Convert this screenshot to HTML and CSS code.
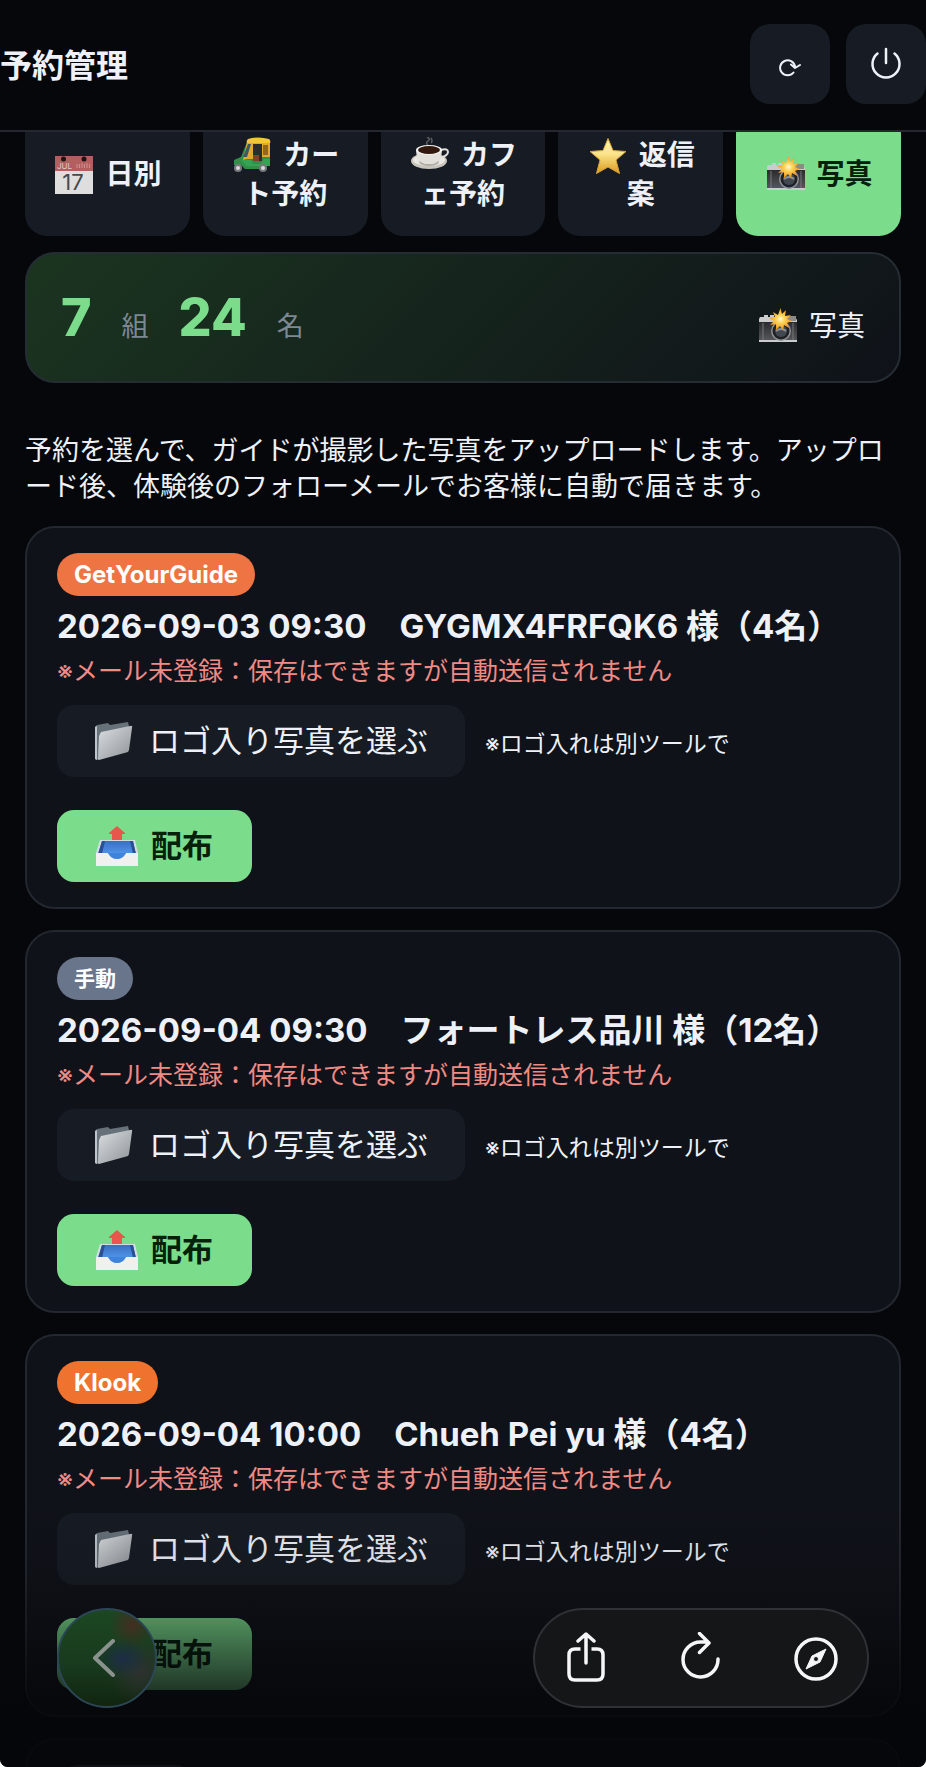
FILE: index.html
```html
<!DOCTYPE html>
<html lang="ja">
<head>
    <meta charset="UTF-8">
    <meta name="viewport" content="width=device-width, initial-scale=1.0">
    <title>予約管理</title>
    <link rel="stylesheet" href="styles.css">
</head>
<body>

    <!-- Shared icons -->
    <svg class="sprite" aria-hidden="true">
        <defs>
            <linearGradient id="gold" x1="0" y1="0" x2="0" y2="1">
                <stop offset="0" stop-color="#fff3b0"/>
                <stop offset="0.45" stop-color="#fbe38a"/>
                <stop offset="1" stop-color="#dc9a1c"/>
            </linearGradient>
            <linearGradient id="silver" x1="0" y1="0" x2="1" y2="1">
                <stop offset="0" stop-color="#dcdfe2"/>
                <stop offset="1" stop-color="#8d9297"/>
            </linearGradient>
            <linearGradient id="cameraBody" x1="0" y1="0" x2="0" y2="1">
                <stop offset="0" stop-color="#2b2b2c"/>
                <stop offset="1" stop-color="#55565a"/>
            </linearGradient>
            <radialGradient id="flash">
                <stop offset="0" stop-color="#fffbe0"/>
                <stop offset="0.35" stop-color="#ffd65a"/>
                <stop offset="1" stop-color="#f0901c"/>
            </radialGradient>
            <linearGradient id="trayBlue" x1="0" y1="0" x2="0" y2="1">
                <stop offset="0" stop-color="#3a6fc0"/>
                <stop offset="1" stop-color="#4f95ea"/>
            </linearGradient>
        </defs>

        <symbol id="icon-rickshaw" viewBox="0 0 38 38">
            <path d="M14 5 8 20l-7 3v5h7l4 4h14l4-3h7V5z" fill="#2f9148"/>
            <path d="M14 5h23v15h-8V9h-9v13h-6l-4 1z" fill="#e0ab2c"/>
            <path d="M15 7h3l-4 13h-4z" fill="#3a5b60"/>
            <path d="M20 7h9v17h-9z" fill="#27302b"/>
            <path d="M30 8h5v10h-5z" fill="#8f6a1c"/>
            <path d="M20 18h6v6h-6z" fill="#7d432b"/>
            <path d="M15 2q10-3 21 0 2 2 1 4H14q-1-2 1-4z" fill="#f3c837"/>
            <path d="M8 23h10l2 4h8l3-5h6v7H14z" fill="#35a353"/>
            <circle cx="5" cy="31" r="4" fill="#77797d"/><circle cx="5" cy="31" r="2" fill="#d9dadc"/>
            <circle cx="30" cy="31" r="4" fill="#77797d"/><circle cx="30" cy="31" r="2" fill="#d9dadc"/>
        </symbol>

        <symbol id="icon-coffee" viewBox="0 0 38 38">
            <path d="M17 8q-3-2 0-4t-1-4M20 6q2-2 0-5" fill="none" stroke="#5d5f61" stroke-width="1.500"/>
            <ellipse cx="18" cy="24" rx="18" ry="8" fill="#c9c5bd"/>
            <ellipse cx="18" cy="23" rx="16" ry="6" fill="#eae7e0"/>
            <ellipse cx="18" cy="25" rx="10" ry="4" fill="#b3aea5"/>
            <path d="M30 13q7-2 7 2 0 4-9 6" fill="none" stroke="#e2dfd8" stroke-width="2"/>
            <path d="M5 13q0 12 9 14h8q9-2 9-14z" fill="#e3e0da"/>
            <ellipse cx="18" cy="13" rx="13" ry="5" fill="#f4f2ee"/>
            <ellipse cx="18" cy="13" rx="11" ry="4" fill="#33180d"/>
        </symbol>

        <symbol id="icon-star" viewBox="0 0 38 38">
            <path d="M19 1.500 24 13.500l13 1-10 8.500 3.500 13.500L19 30 7.500 36.500 11 23 1 14.500l13-1z" fill="url(#gold)" stroke="#d9a336" stroke-width="1" stroke-linejoin="round"/>
        </symbol>

        <symbol id="icon-camera" viewBox="0 0 38 38">
            <path d="M1 9h4V7h4v2h2V7h4v2h21l2 3v22H0V11z" fill="#c9cbcd"/>
            <rect y="14" width="38" height="18" fill="url(#cameraBody)"/>
            <path d="M4 15v17M34 15v17" stroke="#76787b" stroke-width="1"/>
            <rect x="28" y="8" width="9" height="5" fill="#8d8b82"/>
            <circle cx="22" cy="23" r="10" fill="#8e9195"/>
            <circle cx="22" cy="23" r="8.500" fill="#202124"/>
            <circle cx="22" cy="23" r="6" fill="#43474e"/>
            <path d="M17 23q5-4 10 0" fill="none" stroke="#8c939c" stroke-width="2"/>
            <path d="m21.500 0 1.500 6 4-4-1 6 6-1-4 4 5 2-5 2 2 5-5-3-1 5-3-4-4 4v-6l-6 1 4-4-5-3 6-1-2-5 5 3z" fill="url(#flash)"/>
        </symbol>

        <symbol id="icon-folder" viewBox="0 0 39 39">
            <path d="M1 5 3 3l11-2 2 2 18-3 1 4-28 30-4 4-2-1z" fill="#67717a"/>
            <path d="M1 5 3 4v34l-2-1z" fill="#bfc5ca"/>
            <path d="M5 14 7 10 36 4q3-1 2 2l-3 22-1 2-29 8q-2 0-1-3z" fill="url(#silver)"/>
        </symbol>

        <symbol id="icon-outbox" viewBox="0 0 42 42">
            <path d="m21 1 8 7v1h-3v6H16V9h-3V8z" fill="#e8574c"/>
            <path d="M4 15h35l3 13v13H0V28z" fill="#d7dde6"/>
            <path d="M6 16h31l3 13H2z" fill="url(#trayBlue)"/>
            <path d="M6 16 2 29h4l3-13zM37 16l3 13h-3l-3-13z" fill="#2a4f92"/>
            <path d="M0 28h12q3 6 9 6t9-6h12v13H0z" fill="#f0f0ef"/>
            <path d="M12 28h18q-3 6-9 6t-9-6z" fill="#3e83dc"/>
        </symbol>
    </svg>

    <div class="app">
        <header class="header">
            <h1>予約管理</h1>
            <div class="header-actions">
                <button type="button" class="icon-btn" aria-label="更新">
                    <svg width="22" height="26" viewBox="0 0 22 26" fill="none" stroke="currentColor" stroke-width="2" stroke-linecap="round" stroke-linejoin="round">
                        <path d="M14.500 21.500A7.500 7.500 0 1 1 16 15.500v1M12 13.500l4 3.500 5-3"/>
                    </svg>
                </button>
                <button type="button" class="icon-btn" aria-label="ログアウト">
                    <svg width="32" height="34" viewBox="0 0 32 34" fill="none" stroke="currentColor" stroke-width="2.500" stroke-linecap="round">
                        <path d="M16 2v14M7.500 6.500a13.500 13.500 0 1 0 17 0"/>
                    </svg>
                </button>
            </div>
        </header>

        <main class="content">
            <nav class="tabs">
                <button type="button" class="tab">
                    <span><svg class="emoji" viewBox="0 0 38 38">
                        <rect width="38" height="38" fill="#dededf"/>
                        <rect width="38" height="15" fill="#b45f5f"/>
                        <circle cx="8.500" cy="3" r="2.500" fill="#1d1515"/>
                        <circle cx="29" cy="3" r="2.500" fill="#1d1515"/>
                        <path d="M22 12V8M24.500 12V8M27 12V7M29.500 12V8M32 12V7M34.500 12V8" stroke="#cf9292" stroke-width="1"/>
                        <text class="cal-month" x="2" y="13">JUL</text>
                        <text class="cal-day" x="18" y="34">17</text>
                    </svg>日別</span>
                </button>
                <button type="button" class="tab"><span><svg class="emoji"><use href="#icon-rickshaw"/></svg>カート予約</span></button>
                <button type="button" class="tab"><span><svg class="emoji"><use href="#icon-coffee"/></svg>カフェ予約</span></button>
                <button type="button" class="tab"><span><svg class="emoji"><use href="#icon-star"/></svg>返信案</span></button>
                <button type="button" class="tab active"><span><svg class="emoji"><use href="#icon-camera"/></svg>写真</span></button>
            </nav>

            <section class="summary">
                <strong>7</strong>
                <span class="unit">組</span>
                <strong>24</strong>
                <span class="unit">名</span>
                <span class="summary-label"><svg class="emoji"><use href="#icon-camera"/></svg>写真</span>
            </section>

            <p class="intro">予約を選んで、ガイドが撮影した写真をアップロードします。アップロード後、体験後のフォローメールでお客様に自動で届きます。</p>

            <article class="card">
                <span class="badge gyg">GetYourGuide</span>
                <h2>2026-09-03 09:30　GYGMX4FRFQK6 様（4名）</h2>
                <p class="warning">※メール未登録：保存はできますが自動送信されません</p>
                <div class="picker">
                    <button type="button" class="btn choose-btn"><svg><use href="#icon-folder"/></svg>ロゴ入り写真を選ぶ</button>
                    <span class="hint">※ロゴ入れは別ツールで</span>
                </div>
                <button type="button" class="btn send-btn"><svg><use href="#icon-outbox"/></svg>配布</button>
            </article>

            <article class="card">
                <span class="badge manual">手動</span>
                <h2>2026-09-04 09:30　フォートレス品川 様（12名）</h2>
                <p class="warning">※メール未登録：保存はできますが自動送信されません</p>
                <div class="picker">
                    <button type="button" class="btn choose-btn"><svg><use href="#icon-folder"/></svg>ロゴ入り写真を選ぶ</button>
                    <span class="hint">※ロゴ入れは別ツールで</span>
                </div>
                <button type="button" class="btn send-btn"><svg><use href="#icon-outbox"/></svg>配布</button>
            </article>

            <article class="card">
                <span class="badge klook">Klook</span>
                <h2>2026-09-04 10:00　Chueh Pei yu 様（4名）</h2>
                <p class="warning">※メール未登録：保存はできますが自動送信されません</p>
                <div class="picker">
                    <button type="button" class="btn choose-btn"><svg><use href="#icon-folder"/></svg>ロゴ入り写真を選ぶ</button>
                    <span class="hint">※ロゴ入れは別ツールで</span>
                </div>
                <button type="button" class="btn send-btn"><svg><use href="#icon-outbox"/></svg>配布</button>
            </article>

            <article class="card">
                <span class="badge pending"></span>
            </article>
        </main>

        <!-- Floating browser controls -->
        <div class="bottom-fade"></div>
        <div class="bottom-bar">
            <button type="button" class="back-btn" aria-label="戻る">
                <svg width="24" height="38" viewBox="0 0 24 38" fill="none" stroke="currentColor" stroke-width="4" stroke-linecap="round" stroke-linejoin="round">
                    <path d="M21 2 3 19l18 17"/>
                </svg>
            </button>
            <div class="toolbar">
                <button type="button" aria-label="共有">
                    <svg width="48" height="52" viewBox="0 0 48 52" fill="none" stroke="currentColor" stroke-width="3.500" stroke-linecap="round" stroke-linejoin="round">
                        <path d="M24 31V3M16 9l8-7 8 7"/>
                        <path stroke-linecap="butt" d="M18.500 17H13q-6 0-6 6v19q0 6 6 6h22q6 0 6-6V23q0-6-6-6h-5.500"/>
                    </svg>
                </button>
                <button type="button" aria-label="再読み込み">
                    <svg width="48" height="52" viewBox="0 0 48 52" fill="none" stroke="currentColor" stroke-width="3.500" stroke-linecap="round" stroke-linejoin="round">
                        <path d="M41 27A17.500 17.500 0 1 1 23.500 10H31M22.500 1.500 32 11l-9.500 9.500"/>
                    </svg>
                </button>
                <button type="button" aria-label="ブラウザで開く">
                    <svg width="48" height="52" viewBox="0 0 48 52" fill="none" stroke="currentColor" stroke-width="3.500">
                        <circle cx="24" cy="27" r="20"/>
                        <path fill="currentColor" fill-rule="evenodd" stroke-width="1" stroke-linejoin="round" d="M34 17 28 30 14 37 20 24zM24 24.500a2.500 2.500 0 1 0 0 5 2.500 2.500 0 0 0 0-5z"/>
                    </svg>
                </button>
            </div>
        </div>
    </div>

</body>
</html>
```

FILE: styles.css
```css
/* General Styles */
* {
    margin: 0;
    padding: 0;
    box-sizing: border-box;
}

html {
    background-color: #fff;
}

body {
    font-family: Inter, "Noto Sans CJK JP", sans-serif;
    font-size: 28px;
    color: #eef1f8;
}

button {
    border: none;
    font: inherit;
    color: inherit;
    cursor: pointer;
}

.sprite {
    position: absolute;
    width: 0;
    height: 0;
}

.app {
    position: relative;
    display: flex;
    flex-direction: column;
    height: 100vh;
    overflow: hidden;
    background-color: #05070b;
    border-radius: 0 0 8px 8px;
}

/* Header */
.header {
    position: relative;
    z-index: 1;
    display: flex;
    justify-content: space-between;
    align-items: center;
    flex-shrink: 0;
    padding: 24px 0 26px;
    background-color: #05070b;
    border-bottom: 2px solid #23272f;
}

.header h1 {
    padding-top: 4px;
    font-size: 32px;
    line-height: 40px;
    font-weight: 700;
}

.header-actions {
    display: flex;
    gap: 16px;
}

.icon-btn {
    display: flex;
    justify-content: center;
    align-items: center;
    width: 80px;
    height: 80px;
    border-radius: 20px;
    background-color: #171c24;
}

/* Content */
.content {
    flex: 1;
    min-height: 0;
    padding: 0 25px;
}

.emoji {
    width: 38px;
    height: 38px;
    margin: 0 12px 0 2px;
    vertical-align: -10px;
}

.cal-month {
    font-size: 8px;
    font-weight: 400;
    fill: #e5c4c4;
}

.cal-day {
    font-size: 22px;
    font-weight: 400;
    text-anchor: middle;
    fill: #48484a;
}

.tabs {
    display: grid;
    grid-template-columns: repeat(5, 1fr);
    gap: 13px;
    margin-top: -20px;
}

.tab {
    height: 124px;
    padding: 0 20px;
    border-radius: 22px;
    background-color: #171c24;
    font-weight: 700;
    line-height: 38px;
    line-break: loose;
}

.tab.active {
    background-color: #7bdd8c;
    color: #05210b;
}

/* Summary */
.summary {
    display: flex;
    align-items: baseline;
    gap: 30px;
    margin-top: 16px;
    padding: 32px 34px;
    border: 2px solid #252c34;
    border-radius: 30px;
    background: linear-gradient(135deg, #1b3520, #0f1219);
}

.summary strong {
    font-size: 52px;
    line-height: 63px;
    font-weight: 800;
    color: #7bdd8c;
}

.unit {
    font-size: 27px;
    color: #7d8894;
}

.summary-label {
    margin-left: auto;
    line-height: 38px;
}

.intro {
    margin: 50px 0 21px;
    font-size: 27px;
    line-height: 36px;
    line-break: loose;
}

/* Booking cards */
.card {
    margin-bottom: 21px;
    padding: 25px 30px;
    border: 2px solid #23272f;
    border-radius: 30px;
    background-color: #0f1218;
}

.badge {
    display: block;
    width: fit-content;
    padding: 0 17px;
    border-radius: 22px;
    font-size: 24px;
    line-height: 43px;
    font-weight: 700;
    color: #fff;
}

.badge.gyg {
    background-color: #ee7444;
}

.badge.manual {
    font-size: 21px;
    background-color: #69758b;
}

.badge.klook {
    background-color: #ef732f;
}

.badge.pending {
    width: 140px;
    height: 43px;
    background-color: #69758b;
}

.card h2 {
    margin-top: 8px;
    font-size: 33px;
    line-height: 44px;
    font-weight: 700;
}

.warning {
    margin: 5px 0 16px;
    font-size: 25px;
    line-height: 36px;
    color: #f08a84;
}

.picker {
    display: flex;
    align-items: center;
    gap: 20px;
    margin-bottom: 33px;
}

.hint {
    padding-top: 6px;
    font-size: 23px;
    line-height: 36px;
}

.btn {
    display: flex;
    align-items: center;
    height: 72px;
    border-radius: 17px;
    font-size: 31px;
    line-height: 36px;
}

.choose-btn {
    gap: 16px;
    padding: 0 37px;
    background-color: #171c24;
}

.choose-btn svg {
    width: 39px;
    height: 39px;
}

.send-btn {
    gap: 13px;
    padding: 0 39px;
    background-color: #7bdd8c;
    color: #05210b;
    font-weight: 700;
}

.send-btn svg {
    width: 42px;
    height: 42px;
}

/* Bottom controls lie over the list */
.bottom-fade {
    position: absolute;
    inset: auto 0 0;
    height: 270px;
    background: linear-gradient(rgba(5, 6, 9, 0), rgba(5, 6, 9, 0.1) 25%, rgba(5, 6, 9, 0.36) 45%, rgba(5, 6, 9, 0.78) 72%, rgba(5, 6, 9, 0.9) 85%, rgba(5, 6, 9, 0.9));
}

.bottom-bar {
    position: absolute;
    inset: auto 57px 59px;
    display: flex;
    justify-content: space-between;
}

.back-btn {
    display: flex;
    justify-content: center;
    align-items: center;
    width: 100px;
    height: 100px;
    padding-right: 6px;
    border: 2px solid #2c4656;
    border-radius: 50%;
    background:
        radial-gradient(ellipse at 66% 50%, rgba(27, 45, 72, 0.95), rgba(27, 45, 72, 0) 28%),
        radial-gradient(circle at 76% 16%, rgba(84, 36, 34, 0.7), rgba(84, 36, 34, 0) 20%),
        radial-gradient(circle at 84% 64%, rgba(48, 48, 50, 0.9), rgba(48, 48, 50, 0) 32%),
        linear-gradient(#1c4722, #18391d 60%, #11240f);
    color: #89928d;
}

.toolbar {
    display: flex;
    justify-content: space-between;
    align-items: center;
    width: 336px;
    height: 100px;
    padding: 0 27px;
    border: 2px solid #303136;
    border-radius: 50px;
    background-color: #151618;
}

.toolbar button {
    display: flex;
    background: none;
    color: #f6f6f8;
}
```
